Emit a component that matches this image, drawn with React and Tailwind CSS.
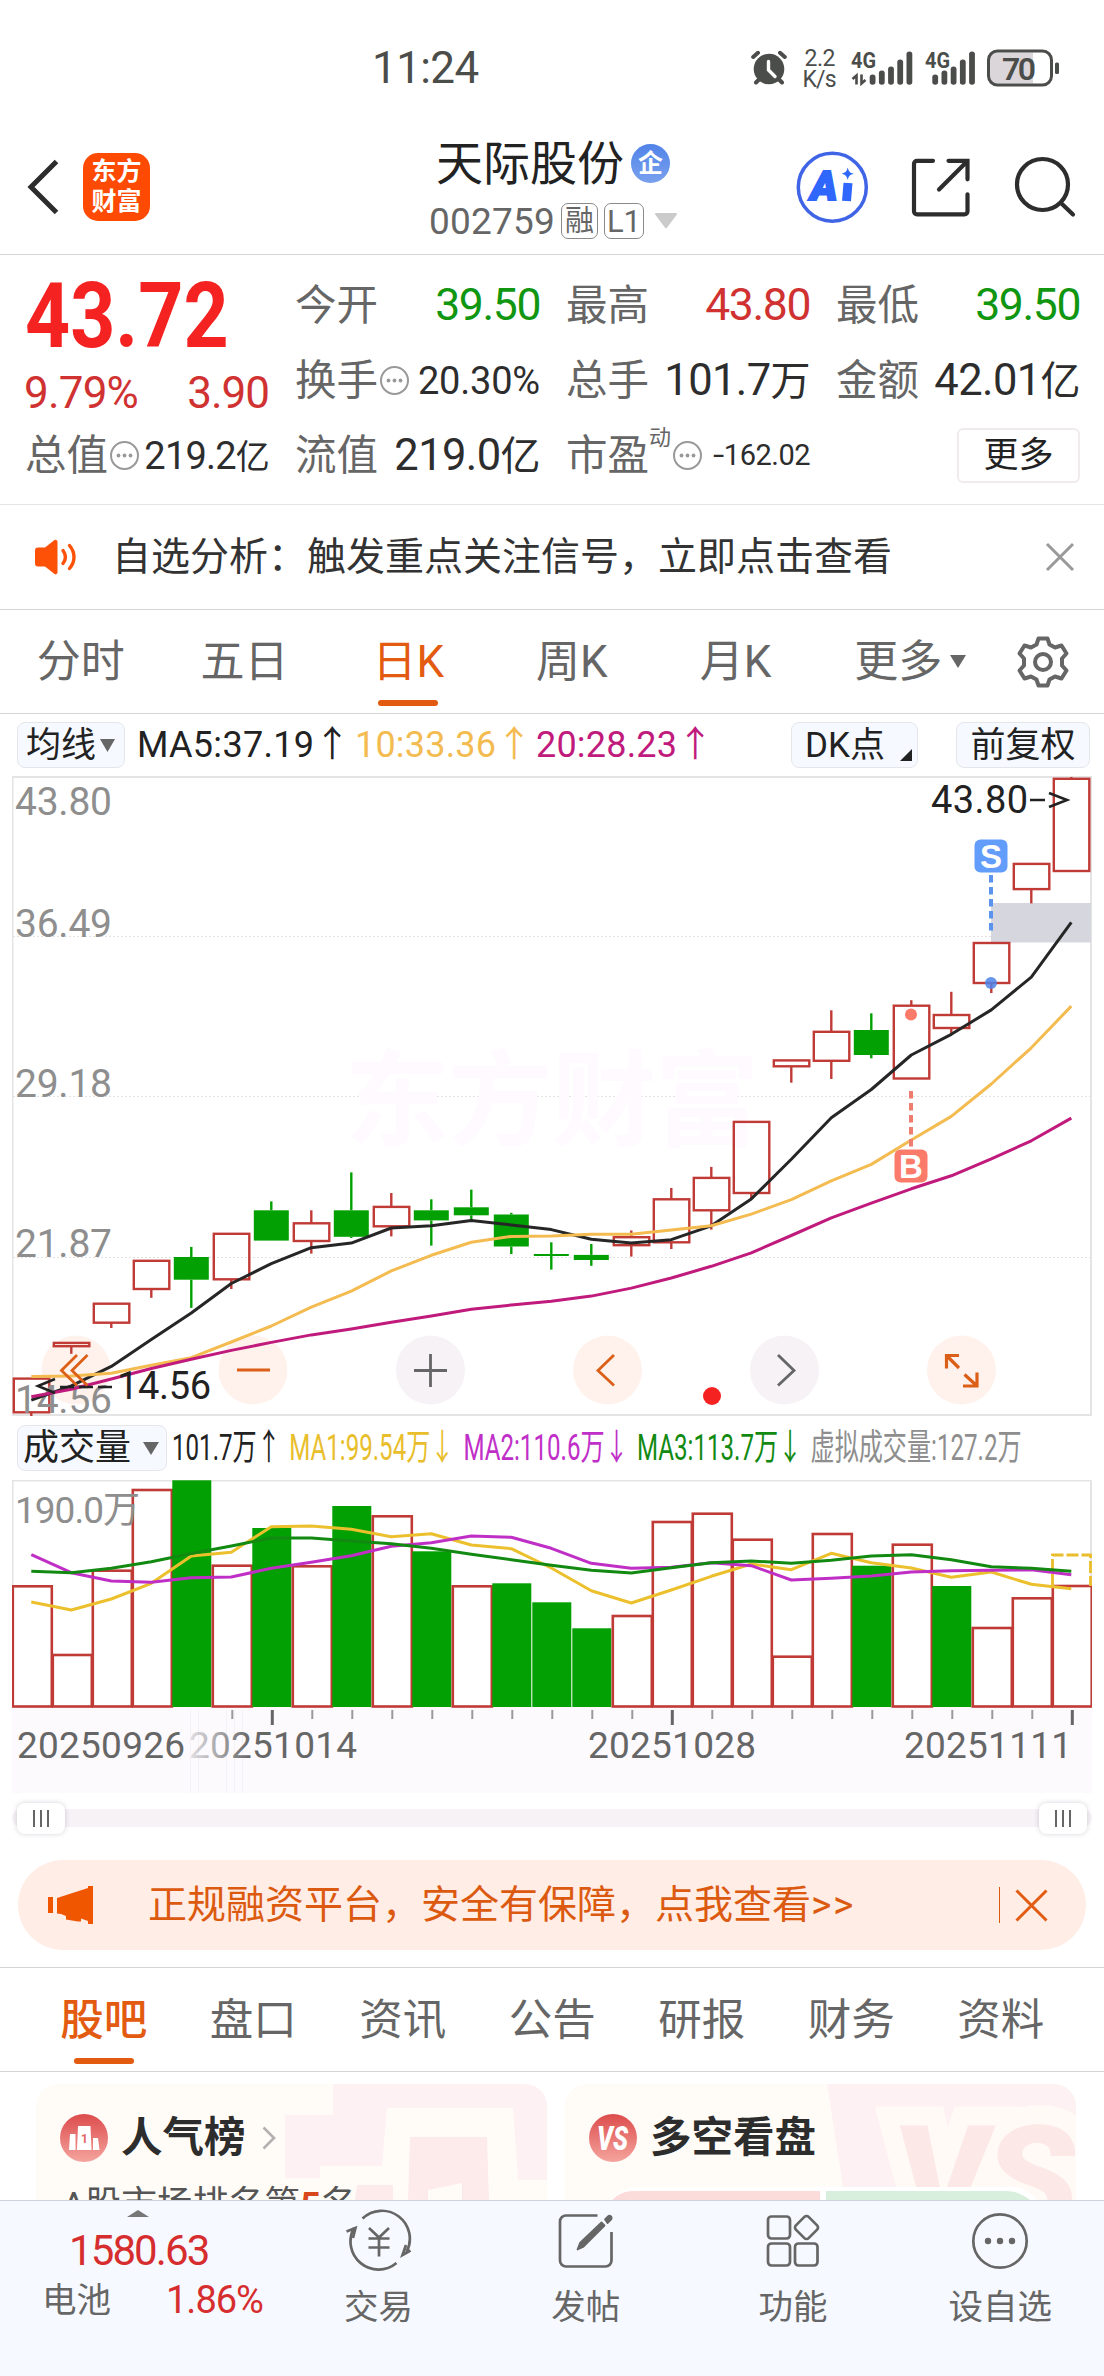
import React from 'react';

const STEP = 40;
const FIRST_X = 31.3;
const cx = (i) => FIRST_X + i * STEP;

// up candles are hollow red, down candles are solid green
const candles = [
    { up: true, top: 1378.6, bottom: 1412.3, low: 1416 },
    { up: true, top: 1342.9, bottom: 1346.2, low: 1353.8 },
    { up: true, top: 1303.7, bottom: 1322.7, low: 1328 },
    { up: true, top: 1260.8, bottom: 1289, low: 1297.8 },
    { up: false, top: 1257, bottom: 1279.7, high: 1246.9, low: 1307.9 },
    { up: true, top: 1233.8, bottom: 1279.3, low: 1289 },
    { up: false, top: 1210.3, bottom: 1240.6, high: 1201.4 },
    { up: true, top: 1223.3, bottom: 1241, high: 1210.3, low: 1253.6 },
    { up: false, top: 1210.3, bottom: 1236.8, high: 1172.4, low: 1238 },
    { up: true, top: 1206.9, bottom: 1226.3, high: 1193, low: 1236.4 },
    { up: false, top: 1210.3, bottom: 1220.4, high: 1199.3, low: 1245.6 },
    { up: false, top: 1207.3, bottom: 1215.3, high: 1189.6, low: 1220.4 },
    { up: false, top: 1214.5, bottom: 1246.5, high: 1212.8, low: 1254 },
    { up: false, top: 1254, bottom: 1256, high: 1242.3, low: 1269.6 },
    { up: false, top: 1254.9, bottom: 1260, high: 1244, low: 1265.8 },
    { up: true, top: 1237.2, bottom: 1245.2, high: 1230.5, low: 1256.6 },
    { up: true, top: 1199.3, bottom: 1242.3, high: 1188, low: 1249 },
    { up: true, top: 1177.9, bottom: 1210.3, high: 1166.9, low: 1229.6 },
    { up: true, top: 1121.9, bottom: 1193, low: 1198 },
    { up: true, top: 1060.4, bottom: 1066.3, low: 1082.7 },
    { up: true, top: 1031.8, bottom: 1060.8, high: 1010.3, low: 1079 },
    { up: false, top: 1030, bottom: 1055, high: 1013.3, low: 1058.3 },
    { up: true, top: 1005.7, bottom: 1078.5, high: 1000.2 },
    { up: true, top: 1015, bottom: 1028, high: 991.8, low: 1034 },
    { up: true, top: 943, bottom: 983, low: 993 },
    { up: true, top: 863.9, bottom: 889.1, low: 903.4 },
    { up: true, top: 778.8, bottom: 871, high: 777 },
];

const ma5 = [1400.1, 1385.8, 1366.4, 1339.5, 1313, 1283.5, 1263.7, 1247.7, 1243.1, 1228, 1225.8, 1220.4, 1225, 1229.6, 1239.3, 1243.1, 1239.7, 1225.8, 1198.9, 1159.3, 1117.7, 1089.5, 1055, 1034.3, 1009.9, 977.1, 922.4];
const ma10 = [1376.5, 1376.1, 1373.2, 1365.2, 1357.6, 1342, 1326, 1307.1, 1291.1, 1270.9, 1255.3, 1242.3, 1236.4, 1236, 1234.3, 1234.3, 1230, 1225.8, 1214.1, 1199.7, 1180.8, 1164.4, 1140, 1116.4, 1084, 1047.8, 1006.1];
const ma20 = [1396.7, 1389.2, 1379, 1368.5, 1359.3, 1350.4, 1342.4, 1334.9, 1329, 1322.2, 1315.9, 1309.2, 1305, 1301.2, 1296.1, 1288.1, 1278, 1266.3, 1252.8, 1235.5, 1217.8, 1203.1, 1188.8, 1175.8, 1158.9, 1140.8, 1118.1];

const volumes = [1586.3, 1655, 1570.7, 1490, 1480.3, 1565.7, 1528, 1566.3, 1506, 1516.3, 1551.3, 1586.3, 1583.3, 1602.3, 1628.3, 1616, 1522, 1513.7, 1539.7, 1656.7, 1534, 1565.7, 1544.7, 1586, 1628, 1598.3, 1586];
const downVolumes = [4, 6, 8, 10, 12, 13, 14, 21, 23];
const vol1 = [1602, 1610, 1599, 1583.3, 1556, 1552.3, 1526.7, 1526, 1529.3, 1536.7, 1533.7, 1545, 1548.7, 1568, 1590.7, 1603, 1590, 1576.3, 1564, 1569.7, 1553.3, 1562.7, 1568, 1577.3, 1572, 1584.3, 1588.7];
const vol2 = [1554.7, 1572.7, 1581, 1582.3, 1577.7, 1577, 1568.3, 1562.3, 1555.7, 1546.3, 1542.7, 1536, 1537.3, 1548.3, 1563.3, 1568.3, 1567.3, 1562.7, 1565.7, 1580, 1578.3, 1576, 1572, 1570.7, 1570.3, 1569.7, 1574.7];
const vol3 = [1571.3, 1572.7, 1568.3, 1561.7, 1553.5, 1546, 1538, 1538, 1541, 1543.7, 1548.3, 1554.3, 1559.7, 1565.3, 1570.3, 1573, 1567.7, 1562.7, 1561, 1563.3, 1560.3, 1556, 1554.7, 1559.7, 1566.7, 1568.3, 1571.3];

const toPoints = (ys) => ys.map((y, i) => `${cx(i)},${y}`).join(' ');

const periods = ['分时', '五日', '日K', '周K', '月K', '更多'];
const sections = ['股吧', '盘口', '资讯', '公告', '研报', '财务', '资料'];

const Signal = ({ x, arrows }) => (
    <g fill="#4b4d4a">
        <text x={x} y="67" fontSize="22" fontWeight="700" textLength="25" lengthAdjust="spacingAndGlyphs">4G</text>
        {arrows && (
            <path d="M852.500 78.500l4-3.500v9M865.500 79.500l-4 3.500v-9" fill="none" stroke="#4b4d4a" strokeWidth="2.600" />
        )}
        {[74, 70, 66, 59, 51].map((top, i) => (
            <rect key={top} x={x + (arrows ? 18.700 : 7.300) + i * 9.200} y={top} width="5.800" height={84.300 - top} rx="2.800" />
        ))}
    </g>
);

const StatusBar = () => (
    <div className="flex h-[135px] items-center">
        <div className="w-[740px] pl-[372px] text-[44px] leading-none tracking-[-0.6px] text-[#4b4d4a]">11:24</div>
        <svg className="h-[60px] w-[340px]" viewBox="740 37.500 340 60" fontFamily="Roboto, sans-serif">
            <g stroke="#4b4d4a" fill="none" strokeLinecap="round">
                <circle cx="769" cy="68.500" r="15.300" fill="#4b4d4a" stroke="none" />
                <path d="M753.200 56.500l4.800-4.200M784.800 56.500l-4.800-4.200M756 82l4-4M782 82l-4-4" strokeWidth="4" />
                <path d="M768.500 61v8.500l6.500 6.500" stroke="#fff" strokeWidth="3.400" />
            </g>
            <text x="804.500" y="65.500" fontSize="23" fill="#4b4d4a" textLength="31">2.2</text>
            <text x="802.500" y="86" fontSize="23" fill="#4b4d4a" textLength="34">K/s</text>
            <Signal x={851} arrows />
            <Signal x={925} />
            <rect x="990" y="52" width="43" height="31" fill="#dad6da" />
            <rect x="988.500" y="50.500" width="63" height="34" rx="9" fill="none" stroke="#4b4d4a" strokeWidth="3" />
            <rect x="1055" y="62" width="4" height="11.500" rx="1.500" fill="#4b4d4a" />
            <text x="1002" y="79" fontSize="32" fontWeight="600" fill="#4b4d4a" textLength="34">70</text>
        </svg>
    </div>
);

const Header = () => (
    <div className="flex h-[120px] border-b border-[#d5d5d5]">
        <div className="flex h-[104px] w-[401px] items-center pl-[27px]">
            <svg className="h-[56px] w-[32px]" viewBox="0 0 32 56" fill="none" stroke="#2d2d2d" strokeWidth="5">
                <path d="M29.500 2.500L4 28l25.500 25.500" />
            </svg>
            <div className="ml-6 flex h-[68px] w-[67px] flex-col items-center justify-center gap-[4px] rounded-[15px] bg-[#fe4a02] text-[25px] leading-[26px] font-bold text-white">
                <span>东方</span>
                <span>财富</span>
            </div>
        </div>
        <div className="flex w-[304px] flex-col items-center">
            <div className="flex h-[56px] items-center gap-[7px] text-[47px] leading-none text-[#222]">
                <span>天际股份</span>
                <span className="flex size-[39px] items-center justify-center rounded-full bg-linear-to-b from-[#5183e8] to-[#78a0ee] text-[25px] font-bold text-white">企</span>
            </div>
            <div className="mt-[10px] flex h-[40px] items-center gap-[6px] text-[37px] leading-none text-[#666]">
                <span className="tracking-[0.2px]">002759</span>
                <span className="flex h-[36px] w-[37px] items-center justify-center rounded-[7px] border border-[#8a8a8a] text-[29px]">融</span>
                <span className="flex h-[36px] w-[40px] items-center justify-center rounded-[7px] border border-[#8a8a8a] text-[31px]">L1</span>
                <svg className="ml-[5px] h-[16px] w-[22px]" viewBox="0 0 22 16" fill="#cbcbcb">
                    <path d="M1 0h20a1 1 0 0 1 .7 1.700L11.700 15a1 1 0 0 1-1.400 0L.300 1.700A1 1 0 0 1 1 0z" />
                </svg>
            </div>
        </div>
        <svg className="h-[104px] w-[399px]" viewBox="705 135 399 104" fill="none" stroke="#2d2d2d" strokeWidth="4.200" strokeLinecap="round">
            <circle cx="832.300" cy="187.300" r="34" stroke="#4064e6" strokeWidth="3.500" />
            <text x="810.500" y="200" fontFamily="Roboto, sans-serif" fontSize="40" fontWeight="900" fontStyle="italic" fill="#2f66fb" stroke="#2f66fb" strokeWidth="2" textLength="27" lengthAdjust="spacingAndGlyphs">A</text>
            <path d="M848 183l-1.500 18" stroke="#2f66fb" strokeWidth="9" strokeLinecap="butt" />
            <path d="M847.700 167.500c1 4 2.200 5.300 6 6.200c-3.800 1-5 2.300-6 6.200c-1-4-2.200-5.200-6-6.200c3.800-1 5-2.200 6-6.200z" fill="#2f66fb" stroke="none" />
            <path d="M933 160.800H917a3 3 0 0 0-3 3v47.500a3 3 0 0 0 3 3h47.500a3 3 0 0 0 3-3v-17M948.500 160.800h19v18.500M967 161.500l-28 28" />
            <circle cx="1042.500" cy="184.500" r="25.500" />
            <path d="M1061.500 203.500l11.500 11" />
        </svg>
    </div>
);

const Info = () => (
    <svg className="ml-[1px] size-[31px] shrink-0" viewBox="0 0 31 31" fill="#999">
        <circle cx="15.500" cy="15.500" r="13.500" fill="none" stroke="#999" strokeWidth="2" />
        <circle cx="9.500" cy="15.500" r="1.900" />
        <circle cx="15.500" cy="15.500" r="1.900" />
        <circle cx="21.500" cy="15.500" r="1.900" />
    </svg>
);

const Cell = ({ label, info, sup, children }) => (
    <div className="flex items-center justify-between text-[41.500px] leading-none whitespace-nowrap text-[#666]">
        <span className="flex items-center">
            {label}
            {sup && <span className="-mt-[36px] text-[22px]">{sup}</span>}
            {info && <Info />}
        </span>
        {children}
    </div>
);

const Quote = () => (
    <div className="grid h-[250px] grid-cols-[244px_245px_244px_244px] grid-rows-[75px_75px_75px] gap-x-[26px] border-b border-[#e6e6e6] pt-[13px] pl-[25px]">
        <div className="row-span-2 leading-none">
            <div className="flex h-[98px] items-center">
                <span className="origin-left scale-x-[0.875] text-[90px] font-bold text-[#f52222]">43.72</span>
            </div>
            <div className="flex h-[54px] items-center justify-between text-[44px] text-[#d03232]">
                <span className="-ml-[1px] tracking-[-0.8px]">9.79%</span>
                <span className="tracking-[-1px]">3.90</span>
            </div>
        </div>
        <Cell label="今开"><span className="text-[44.500px] tracking-[-1.4px] text-[#109610]">39.50</span></Cell>
        <Cell label="最高"><span className="text-[44.500px] tracking-[-1.4px] text-[#d03232]">43.80</span></Cell>
        <Cell label="最低"><span className="text-[44.500px] tracking-[-1.4px] text-[#109610]">39.50</span></Cell>
        <Cell label="换手" info><span className="text-[38px] tracking-[-0.2px] text-[#2d2d2d]">20.30%</span></Cell>
        <Cell label="总手"><span className="text-[43.500px] tracking-[-0.6px] text-[#2d2d2d]">101.7<span className="text-[40px]">万</span></span></Cell>
        <Cell label="金额"><span className="text-[43.500px] tracking-[-0.6px] text-[#2d2d2d]">42.01<span className="text-[40px]">亿</span></span></Cell>
        <Cell label="总值" info><span className="text-[38px] tracking-[-0.8px] text-[#2d2d2d]">219.2<span className="text-[34px]">亿</span></span></Cell>
        <Cell label="流值"><span className="text-[43.500px] tracking-[-0.6px] text-[#2d2d2d]">219.0<span className="text-[40px]">亿</span></span></Cell>
        <Cell label="市盈" sup="动" info>
            <span className="flex items-center text-[29px] tracking-[-0.5px] text-[#2d2d2d]"><span className="inline-block origin-right scale-x-[1.4]">-</span>162.02</span>
        </Cell>
        <div className="flex items-center justify-end">
            <div className="flex h-[55px] w-[123px] items-center justify-center rounded-md border-2 border-[#f0ecec] text-[35px] leading-none text-[#222]">更多</div>
        </div>
    </div>
);

const Notice = () => (
    <div className="flex h-[105px] items-center border-b border-[#d5d5d5] pr-[29px] pl-[34px]">
        <svg className="h-[36px] w-[44px]" viewBox="0 0 44 36" fill="#fd5108">
            <path d="M1 11.500a3 3 0 0 1 3-3h7L20.500 1a2 2 0 0 1 3 1.500v31a2 2 0 0 1-3 1.500L11 27.500H4a3 3 0 0 1-3-3z" />
            <path d="M29 11.500c3 4 3 9 0 13M35.500 6.500c6 7 6 16 0 23" fill="none" stroke="#fd5108" strokeWidth="3.400" strokeLinecap="round" />
        </svg>
        <span className="ml-[34px] text-[39px] leading-none text-[#333]">自选分析：触发重点关注信号，立即点击查看</span>
        <svg className="ml-auto h-[30px] w-[30px]" viewBox="0 0 30 30" stroke="#999" strokeWidth="3">
            <path d="M2 2l26 26M28 2L2 28" />
        </svg>
    </div>
);

const PeriodTabs = () => (
    <div className="-ml-[1px] flex h-[104px] border-b border-[#d5d5d5]">
        {periods.map((name) => (
            <div
                key={name}
                className={`relative flex w-[163.700px] items-center justify-center text-[44px] leading-none ${name === '日K' ? 'text-[#e35b10]' : 'text-[#666]'}`}
            >
                {name}
                {name === '更多' && (
                    <svg className="ml-[8px] -mr-[22px] h-[13px] w-[16px]" viewBox="0 0 16 13" fill="#666"><path d="M0 0h16L8 13z" /></svg>
                )}
                {name === '日K' && <span className="absolute bottom-[7px] h-[6px] w-[60px] rounded-full bg-[#e35b10]" />}
            </div>
        ))}
        <div className="flex flex-1 items-center justify-center">
            <svg className="size-[56px]" viewBox="-28 -28 56 56" fill="none" stroke="#666" strokeWidth="4" strokeLinejoin="round">
                <path d="M-4.500 -23.500H4.500L6.500 -17.500L12 -14.500L18.500 -16.500L23.500 -8.500L19 -3.500V3.500L23.500 8.500L18.500 16.500L12 14.500L6.500 17.500L4.500 23.500H-4.500L-6.500 17.500L-12 14.500L-18.500 16.500L-23.500 8.500L-19 3.500V-3.500L-23.500 -8.500L-18.500 -16.500L-12 -14.500L-6.500 -17.500Z" />
                <circle r="8" />
            </svg>
        </div>
    </div>
);

const AverageRow = () => (
    <div className="flex h-[62px] items-center pl-[17px] text-[36px] leading-none whitespace-nowrap">
        <div className="flex h-[46px] w-[108px] items-center rounded-lg border border-[#e4e6ea] bg-[#f6f9ff] pl-[8px] text-[35px] text-[#222]">
            均线
            <svg className="ml-[4px] h-[13px] w-[15px]" viewBox="0 0 15 13" fill="#666"><path d="M0 0h15L7.500 13z" /></svg>
        </div>
        <span className="ml-[12px] w-[218px] tracking-[0.3px] text-[#222]">MA5:37.19↑</span>
        <span className="w-[181px] tracking-[0.2px] text-[#f3bb50]">10:33.36↑</span>
        <span className="w-[255px] tracking-[0.2px] text-[#c01a7c]">20:28.23↑</span>
        <div className="relative flex h-[46px] w-[127px] items-center rounded-lg border border-[#e4e6ea] bg-[#f6f9ff] pl-[13px] text-[35px] text-[#222]">
            DK点
            <svg className="absolute right-[5px] bottom-[6px] size-[12px]" viewBox="0 0 12 12" fill="#222"><path d="M12 0v12H0z" /></svg>
        </div>
        <div className="ml-[38px] flex h-[46px] w-[134px] items-center justify-center rounded-lg border border-[#e4e6ea] bg-[#f6f9ff] text-[35px] text-[#222]">前复权</div>
    </div>
);

const CandleChart = () => (
    <svg className="ml-[12px] block h-[640px] w-[1080px]" viewBox="12 776 1080 640" fontFamily="Roboto, 'Noto Sans CJK SC', sans-serif">
        <rect x="12.500" y="777" width="1078.500" height="638" fill="none" stroke="#e4e4e4" strokeWidth="2" />
        <g stroke="#e2e2e2" strokeDasharray="2 2">
            <path d="M13 936.500H1091M13 1096.500H1091M13 1257.500H1091" />
        </g>
        <text x="345" y="1138" fontSize="104" fontWeight="700" fill="#fefaff" textLength="414">东方财富</text>
        <rect x="991" y="903" width="100" height="39.500" fill="#d6d6df" />

        {[76, 253, 607.500, 961.500].map((x) => <circle key={x} cx={x} cy="1370" r="34.500" fill="#fff2ec" />)}
        {[430.500, 784.500].map((x) => <circle key={x} cx={x} cy="1370" r="34.500" fill="#f6f2f6" />)}

        {candles.map((c, i) => {
            const color = c.up ? '#c03a36' : '#02a002';
            return (
                <g key={i} stroke={color} strokeWidth="2.400">
                    {c.high && <path d={`M${cx(i)} ${c.high}V${c.top}`} />}
                    {c.low && <path d={`M${cx(i)} ${c.bottom}V${c.low}`} />}
                    {c.up
                        ? <rect x={cx(i) - 17.500} y={c.top} width="35.500" height={c.bottom - c.top} fill="none" />
                        : <rect x={cx(i) - 17.500} y={c.top} width="35" height={c.bottom - c.top} fill={color} stroke="none" />}
                </g>
            );
        })}

        <g fill="#8e8e8e" fontSize="39">
            <text x="15" y="815" textLength="97">43.80</text>
            <text x="15" y="937" textLength="97">36.49</text>
            <text x="15" y="1097" textLength="97">29.18</text>
            <text x="15" y="1257" textLength="97">21.87</text>
            <text x="15" y="1413" textLength="97">14.56</text>
        </g>

        <g fill="none" strokeWidth="3" strokeLinejoin="round">
            <polyline points={toPoints(ma5)} stroke="#262626" />
            <polyline points={toPoints(ma10)} stroke="#f3bb50" />
            <polyline points={toPoints(ma20)} stroke="#c01a7c" />
        </g>

        <g fill="#222" fontSize="38">
            <text x="931" y="812.500" textLength="97">43.80</text>
            <text x="117" y="1398.500" textLength="94">14.56</text>
        </g>
        <g fill="none" stroke="#222" strokeWidth="2.600">
            <path d="M1030 800h15M1049 793l18 7l-18 7" />
            <path d="M55 1379l-17 7l17 7M60 1387h14M79 1387h14M98 1387h14" />
        </g>

        <path d="M991 875V931" stroke="#5a94ee" strokeWidth="4" strokeDasharray="7.500 4.500" />
        <circle cx="991" cy="983" r="6" fill="#4d84ea" fillOpacity="0.850" />
        <rect x="974.500" y="839.500" width="33" height="33" rx="6" fill="#639dfb" />
        <path d="M911 1091V1147" stroke="#ee7d70" strokeWidth="4" strokeDasharray="7.500 4.500" />
        <circle cx="911" cy="1014.500" r="6" fill="#fb7b6b" />
        <rect x="894.500" y="1149.500" width="33" height="33" rx="6" fill="#fb7b6b" />
        <g fill="#fff" fontFamily="'Liberation Sans', sans-serif" fontWeight="700" fontSize="33" textAnchor="middle">
            <text x="991" y="868">S</text>
            <text x="911" y="1178">B</text>
        </g>

        <g fill="none" stroke="#dc5f18" strokeWidth="2.800">
            <path d="M77 1355l-15.500 15.500l15.500 15M87.500 1355l-15.500 15.500l15.500 15" />
            <path d="M237 1370h33" />
            <path d="M614 1355l-16 15.500l16 15" />
            <path d="M959 1355.500H946.500V1368.500M947 1356l12 12M964.500 1374.500l12 11M977 1372.500V1386H963" strokeWidth="3.200" />
        </g>
        <g fill="none" stroke="#666" strokeWidth="2.800">
            <path d="M414 1370.500h33M430.500 1354v33" />
            <path d="M778 1355l16 15.500l-16 15" />
        </g>
        <circle cx="712" cy="1396" r="9" fill="#f52222" />
    </svg>
);

const VolumeRow = () => (
    <div className="flex h-[64px] items-center pl-[17px] leading-none whitespace-nowrap">
        <div className="flex h-[46px] w-[150px] shrink-0 items-center rounded-lg border border-[#e4e6ea] bg-[#f6f9ff] pl-[5px] text-[36px] text-[#222]">
            成交量
            <svg className="ml-[12px] h-[13px] w-[16px]" viewBox="0 0 16 13" fill="#666"><path d="M0 0h16L8 13z" /></svg>
        </div>
        <div className="ml-[5px] flex w-[1280px] shrink-0 origin-left scale-x-[0.67] text-[36px]">
            <span className="w-[175px] text-[#222]">101.7万↑</span>
            <span className="w-[260px] text-[#e9be2c]">MA1:99.54万↓</span>
            <span className="w-[259px] text-[#c030c8]">MA2:110.6万↓</span>
            <span className="w-[259px] text-[#128a12]">MA3:113.7万↓</span>
            <span className="text-[#8e8e8e]">虚拟成交量:127.2万</span>
        </div>
    </div>
);

const VolumeChart = () => (
    <svg className="ml-[12px] block h-[313px] w-[1080px]" viewBox="12 1480 1080 313" fontFamily="Roboto, 'Noto Sans CJK SC', sans-serif">
        <defs>
            <linearGradient id="dateFade" gradientUnits="userSpaceOnUse" x1="188" y1="0" x2="250" y2="0">
                <stop offset="0%" stopColor="#666" stopOpacity="0.150" />
                <stop offset="100%" stopColor="#666" />
            </linearGradient>
        </defs>
        <rect x="12" y="1707" width="1080" height="86" fill="#fdfafe" />
        <path d="M12.500 1707V1480.500H1091V1707" fill="none" stroke="#e4e4e4" strokeWidth="2" />
        {volumes.map((top, i) => (
            downVolumes.includes(i)
                ? <rect key={i} x={cx(i) - 19} y={top} width="39" height={1707 - top} fill="#02a002" />
                : <rect key={i} x={cx(i) - 18.500} y={top} width="39" height={1706.500 - top} fill="none" stroke="#c03a36" strokeWidth="2.600" />
        ))}
        <path d="M1052.500 1586V1555H1090.500V1586" fill="none" stroke="#e9be2c" strokeWidth="2.800" strokeDasharray="12 3" />
        <text x="15" y="1523" fontSize="37" fill="#8e8e8e" textLength="125">190.0万</text>
        <g fill="none" strokeWidth="3" strokeLinejoin="round">
            <polyline points={toPoints(vol1)} stroke="#ecc02c" />
            <polyline points={toPoints(vol2)} stroke="#bf2fc6" />
            <polyline points={toPoints(vol3)} stroke="#128a12" />
        </g>
        {volumes.map((_, i) => {
            if (i < 5) return null;
            const major = i % 10 === 6;
            return <path key={i} d={`M${cx(i) + 1} 1710V${major ? 1725 : 1719}`} stroke={major ? '#666' : '#999'} strokeWidth={major ? 3 : 2} />;
        })}
        <path d="M190.500 1710v83M198.500 1710v83M226.500 1710v83M234.500 1710v83M242.500 1710v83" stroke="#f5f2f7" />
        <g fill="#666" fontSize="37">
            <text x="17" y="1758" textLength="168">20250926</text>
            <text x="189" y="1758" textLength="168" fill="url(#dateFade)">20251014</text>
            <text x="588" y="1758" textLength="168">20251028</text>
            <text x="904" y="1758" textLength="168">20251111</text>
        </g>
    </svg>
);

const Handle = () => (
    <div className="flex h-[31px] w-[48px] items-center justify-center gap-[5px] rounded-lg bg-white shadow-[0_0_5px_rgba(90,70,100,0.25)]">
        <span className="h-[17px] w-[2px] bg-[#666]" />
        <span className="h-[17px] w-[2px] bg-[#666]" />
        <span className="h-[17px] w-[2px] bg-[#666]" />
    </div>
);

const RangeSlider = () => (
    <div className="flex h-[67px] items-start px-[12px] pt-[16px]">
        <div className="flex h-[18px] w-full items-center justify-between rounded-full bg-[#f6f2f6] px-[5px]">
            <Handle />
            <Handle />
        </div>
    </div>
);

const Banner = () => (
    <div className="mx-[18px] flex h-[90px] items-center rounded-full bg-[#ffede6] pl-[29px] text-[#dc5a10]">
        <svg className="h-[40px] w-[47px]" viewBox="0 0 47 40" fill="#f05500">
            <path d="M1 12h5v16H1zM10 13L41 3V1h5v38h-5v-3l-7-2.500v3h-3L19 34.500V31l-5-2l-4-.5z" />
        </svg>
        <span className="ml-[54px] text-[39px] leading-none">正规融资平台，安全有保障，点我查看<span className="tracking-[1.5px]">&gt;&gt;</span></span>
        <span className="ml-auto h-[36px] w-px bg-[#dc5a10]" />
        <svg className="mr-[38px] ml-[15px] size-[33px]" viewBox="0 0 33 33" stroke="#e35b10" strokeWidth="3">
            <path d="M1.500 1.500l30 30M31.500 1.500l-30 30" />
        </svg>
    </div>
);

const SectionTabs = () => (
    <div className="mt-[17px] flex h-[105px] border-y border-[#d5d5d5] pl-[29px]">
        {sections.map((name, i) => (
            <div key={name} className={`relative flex w-[149.500px] items-center justify-center pt-[2px] text-[43.500px] leading-none ${i === 0 ? 'font-medium text-[#e35b10]' : 'text-[#666]'}`}>
                {name}
                {i === 0 && <span className="absolute bottom-[7px] h-[6px] w-[60px] rounded-full bg-[#e35b10]" />}
            </div>
        ))}
    </div>
);

const Cards = () => (
    <div className="flex h-[128px] gap-[18px] overflow-hidden pt-[12px] pl-[36px]">
        <div className="relative h-[200px] w-[511px] shrink-0 overflow-hidden rounded-[22px] bg-[#fffcf8]">
            <svg className="absolute inset-0 h-[116px] w-[511px]" viewBox="36 2084 511 116">
                <path d="M333 2084H547V2180H518L513 2108H387L382 2166H320V2178H285V2115H333z" fill="#fef1f4" />
                <path d="M410 2137H487L489 2200H462V2183L428 2190V2200H408zM357 2185H393V2200H355z" fill="#fdeaeb" />
            </svg>
            <div className="relative mt-[30px] ml-[24px] flex h-[48px] items-center">
                <svg className="size-[48px]" viewBox="0 0 48 48">
                    <defs>
                        <linearGradient id="badge" x1="0" y1="0" x2="0" y2="1">
                            <stop offset="0%" stopColor="#dc4c4c" />
                            <stop offset="100%" stopColor="#f5a49e" />
                        </linearGradient>
                    </defs>
                    <circle cx="24" cy="24" r="24" fill="url(#badge)" />
                    <path d="M10 20h5.500v16H9zM18 12h12.500l1 24H17zM33 24h5l1.500 12H33z" fill="#fff" />
                    <text x="21" y="29" fontSize="12" fontWeight="700" fill="#e26560">1</text>
                </svg>
                <span className="ml-[13px] text-[41.500px] leading-none font-bold text-[#2d2d2d]">人气榜</span>
                <svg className="ml-[16px] h-[24px] w-[14px]" viewBox="0 0 14 24" fill="none" stroke="#b5b0b0" strokeWidth="2.600">
                    <path d="M1.500 1.500L12 12L1.500 22.500" />
                </svg>
            </div>
            <div className="relative mt-[26px] ml-[26px] text-[35.800px] leading-none text-[#555]">
                A股市场排名第<span className="font-bold text-[#d8481c]">5</span>名
            </div>
        </div>
        <div className="relative h-[200px] w-[511px] shrink-0 overflow-hidden rounded-[22px] bg-[#fffcf8]">
            <svg className="absolute inset-0 h-[116px] w-[511px]" viewBox="565 2084 511 116" fontFamily="Roboto, sans-serif">
                <path d="M827 2084H1076V2200H845z" fill="#fef1f3" />
                <g transform="translate(893 2228) skewX(-4)" fontSize="144" fontWeight="900" strokeLinejoin="miter">
                    <text stroke="#fffaf5" strokeWidth="38" textLength="182">VS</text>
                    <text fill="#fde8e8" textLength="182">VS</text>
                </g>
                <rect x="606" y="2187" width="436" height="60" rx="30" fill="#fff" />
                <path d="M820 2191V2200H612C618 2194 625 2191 634 2191z" fill="#fcdcdb" />
                <path d="M826 2191H1006C1016 2191 1024 2195 1030 2200H826z" fill="#d9efde" />
            </svg>
            <div className="relative mt-[30px] ml-[24px] flex h-[48px] items-center">
                <svg className="size-[48px]" viewBox="0 0 48 48">
                    <circle cx="24" cy="24" r="24" fill="url(#badge)" />
                    <text x="8" y="36" fontFamily="Roboto, sans-serif" fontSize="33" fontWeight="900" fontStyle="italic" fill="#fff" textLength="31" lengthAdjust="spacingAndGlyphs">VS</text>
                </svg>
                <span className="ml-[13px] text-[41.500px] leading-none font-bold text-[#2d2d2d]">多空看盘</span>
            </div>
        </div>
    </div>
);

const NavItem = ({ label, children }) => (
    <div className="flex w-[207.200px] flex-col items-center pt-[8px]">
        <svg className="h-[64px] w-[72px]" viewBox="-36 -32 72 64" fill="none" stroke="#666" strokeWidth="2.700" strokeLinejoin="round">
            {children}
        </svg>
        <span className="mt-[17px] text-[34.500px] leading-none text-[#666]">{label}</span>
    </div>
);

const BottomNav = () => (
    <div className="flex h-[176px] border-t border-[#cfd2da] bg-[#f6f9ff]">
        <div className="w-[275px] leading-none text-[#d62e2e]">
            <svg className="mt-[9px] ml-[127px] block h-[7px] w-[22px]" viewBox="0 0 22 7" fill="#777"><path d="M0 7L11 0l11 7z" /></svg>
            <div className="mt-[13px] pl-[69px] text-[42px] tracking-[-1.900px]">1580.63</div>
            <div className="mt-[9px] flex items-center pl-[42px]">
                <span className="w-[124px] text-[34.500px] text-[#666]">电池</span>
                <span className="text-[38px] tracking-[-1px]">1.86%</span>
            </div>
        </div>
        <NavItem label="交易">
            <path d="M-16.500 -22.500A28 28 0 0 1 27.500 11M17.500 22A28 28 0 0 1 -25 -13" />
            <path d="M-32.500 -9.500L-23.500 -13L-26 -3M31.500 9.500L23.500 14L27 4" strokeLinejoin="miter" />
            <path d="M-10 -13L0 -3.500L10 -13M0 -3.500V15.500M-10.500 -2.500H10.500M-10.500 6.500H10.500" />
        </NavItem>
        <NavItem label="发帖">
            <path d="M11.500 -25.500H-20A6 6 0 0 0 -26 -19.500V19.500A6 6 0 0 0 -20 25.500H19.500A6 6 0 0 0 25.500 19.500V-9" />
            <path d="M-8.500 8.500L-6 2L15.500 -18.500L18.500 -15.500L-3 6zM19 -21.500L22 -24.500A2 2 0 0 1 25 -21.500L21.500 -18z" fill="#666" strokeWidth="1.800" />
        </NavItem>
        <NavItem label="功能">
            <rect x="-25" y="-24.500" width="22" height="22" rx="3.500" />
            <rect x="-25" y="2.500" width="22" height="22" rx="3.500" />
            <rect x="2" y="2.500" width="22.500" height="22" rx="3.500" />
            <rect x="4.500" y="-22.500" width="18" height="18" rx="3" transform="rotate(45 13.500 -13.500)" />
        </NavItem>
        <NavItem label="设自选">
            <circle r="26.700" />
            <g fill="#666" stroke="none">
                <circle cx="-12" r="3.200" />
                <circle r="3.200" />
                <circle cx="12" r="3.200" />
            </g>
        </NavItem>
    </div>
);

const App = () => {
    return (
        <div className="h-[2376px] w-[1104px] overflow-hidden bg-white font-[Roboto,'Noto_Sans_CJK_SC',sans-serif]">
            <StatusBar />
            <Header />
            <Quote />
            <Notice />
            <PeriodTabs />
            <AverageRow />
            <CandleChart />
            <VolumeRow />
            <VolumeChart />
            <RangeSlider />
            <Banner />
            <SectionTabs />
            <Cards />
            <BottomNav />
        </div>
    );
};

export default App;
